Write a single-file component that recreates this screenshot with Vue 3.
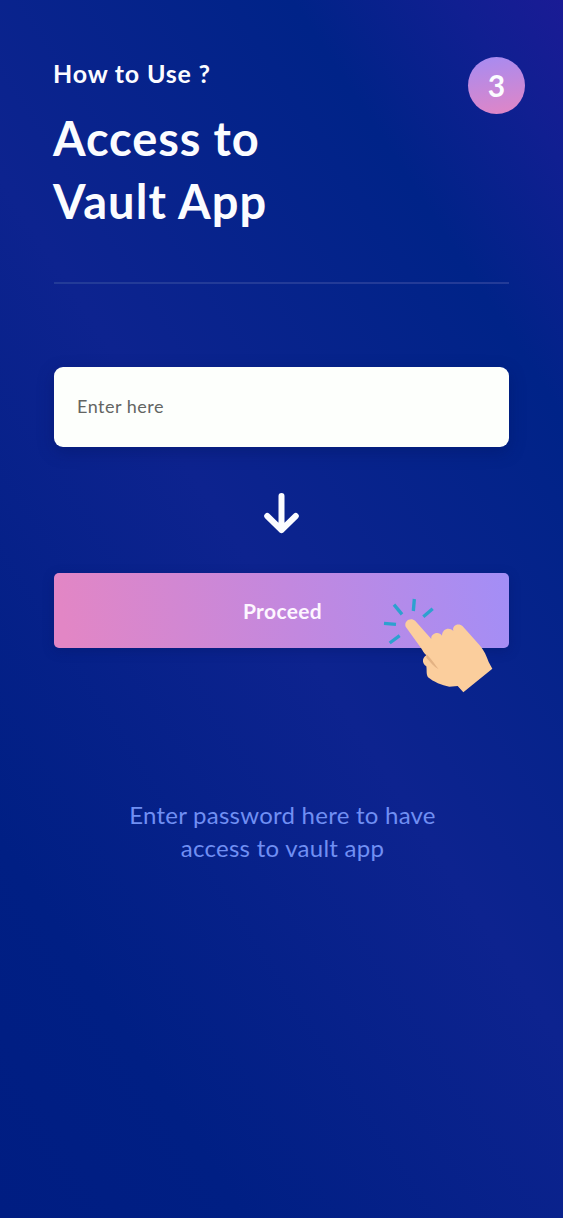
<script setup>
const rays = [
  'M42 115 L78 118',
  'M72 59 L96 88',
  'M133 42 L130 78',
  'M188 71 L160 95',
  'M89 152 L59 174',
]
</script>

<template>
  <main class="screen">
    <header class="header">
      <div class="heading">
        <p class="eyebrow">How to Use ?</p>
        <h1 class="title"><span class="first">Access to</span><br /><span class="second">Vault App</span></h1>
      </div>
      <span class="step">3</span>
    </header>
    <form class="form" @submit.prevent>
      <input class="field" type="text" placeholder="Enter here" aria-label="Password" />
      <svg class="arrow" viewBox="0 0 36 42" aria-hidden="true">
        <path d="M17.5 4V38M3.2 24L17.5 38L31.8 24" />
      </svg>
      <div class="action">
        <button class="proceed" type="submit">Proceed</button>
        <svg class="hand" viewBox="0 0 420 345" aria-hidden="true">
          <path v-for="ray in rays" :key="ray" class="ray" :d="ray" />
          <path
            class="skin"
            d="M107 125 C101 108 122 95 136 108 L184 162 C181 145 207 137 216 152 C216 132 238 124 250 138 C245 120 267 112 278 124 L329 181 C342 196 350 214 356 231 L367 251 L280 322 L263 303 L238 305 C216 302 190 290 174 277 C168 268 171 257 169 244 C157 237 154 220 169 211 C161 204 158 196 153 189 Z"
          />
          <path class="crease" d="M169 208 C181 217 194 238 206 253 C191 244 181 232 169 218 Z" />
        </svg>
      </div>
    </form>
    <p class="hint"><span class="hint-a">Enter password here to have</span><br /><span class="hint-b">access to vault app</span></p>
  </main>
</template>

<style>
body {
  margin: 0;
}
</style>

<style scoped>
.screen {
  box-sizing: border-box;
  width: 563px;
  height: 1218px;
  padding: 57px 54px 0;
  overflow: hidden;
  color: #fbfcff;
  font-family: Lato, "Open Sans", sans-serif;
  background: linear-gradient(57deg, #001d82 0%, #001f84 18%, #0d238f 50%, #002388 80%, #101f91 92%, #1a1b95 100%);
}
.header {
  display: flex;
  justify-content: space-between;
  height: 225px;
  border-bottom: 2px solid #233b98;
}
.eyebrow {
  margin: -1px 0 0 -1px;
  font-size: 25px;
  font-weight: 700;
  line-height: 34px;
  letter-spacing: 0.8px;
  white-space: nowrap;
}
.title {
  margin: 17px 0 0 -1px;
  font-size: 47px;
  font-weight: 700;
  line-height: 63px;
  white-space: nowrap;
}
.first {
  letter-spacing: 0.9px;
}
.second {
  letter-spacing: 1.1px;
}
.step {
  display: flex;
  flex: none;
  align-items: center;
  justify-content: center;
  box-sizing: border-box;
  width: 57px;
  height: 57px;
  margin-right: -16px;
  padding-bottom: 2px;
  border-radius: 50%;
  background: linear-gradient(170deg, #aa8bef 8%, #dd86c8 92%);
  font-size: 30px;
  font-weight: 700;
}
.form {
  display: flex;
  flex-direction: column;
  align-items: stretch;
  padding-top: 83px;
}
.field {
  box-sizing: border-box;
  width: 455px;
  height: 80px;
  padding: 0 23px 2px;
  border: 0;
  border-radius: 9px;
  background: #fdfffc;
  box-shadow: 0 5px 16px rgba(0, 20, 90, 0.35);
  font-family: Lato, sans-serif;
  font-size: 18px;
  letter-spacing: 0.5px;
}
.field::placeholder {
  color: #636563;
  opacity: 1;
}
.arrow {
  align-self: center;
  width: 36px;
  height: 42px;
  margin: 45px 0 39px;
  fill: none;
  stroke: #fbfcff;
  stroke-width: 6;
  stroke-linecap: round;
  stroke-linejoin: round;
}
.action {
  position: relative;
  height: 75px;
}
.proceed {
  width: 455px;
  height: 75px;
  padding: 0 0 1px 2px;
  border: 0;
  border-radius: 5px;
  background: linear-gradient(80deg, #e286c5 3%, #c288df 53%, #a38ef6 100%);
  box-shadow: 0 3px 12px rgba(0, 20, 90, 0.3);
  color: #fdf6ff;
  font-family: Lato, sans-serif;
  font-size: 21px;
  font-weight: 700;
  letter-spacing: 0.35px;
}
.hand {
  position: absolute;
  top: 12px;
  left: 316px;
  width: 140px;
  height: 115px;
}
.ray {
  fill: none;
  stroke: #2da1cf;
  stroke-width: 10;
}
.skin {
  fill: #fbce9d;
}
.crease {
  fill: #e3b283;
}
.hint {
  margin: 150px 0 0;
  padding-left: 2px;
  color: #708ff3;
  font-size: 24px;
  line-height: 33px;
  text-align: center;
  white-space: nowrap;
}
.hint-a {
  letter-spacing: 0.25px;
}
.hint-b {
  letter-spacing: 0.27px;
}
</style>
